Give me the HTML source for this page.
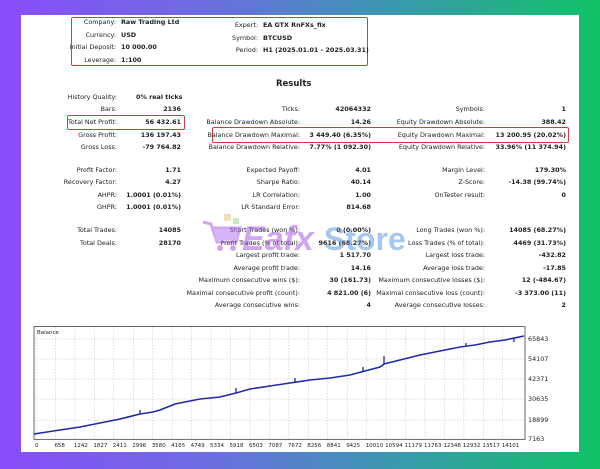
<!DOCTYPE html>
<html><head><meta charset="utf-8"><style>
*{margin:0;padding:0}
body{width:600px;height:469px;overflow:hidden;position:relative;font-family:"DejaVu Sans","Liberation Sans",sans-serif;font-size:6.4px;color:#222;
background:linear-gradient(90deg,#8b4cfb 0%,#6b6ee0 35%,#3a98b0 65%,#11c266 100%);}
#p{position:absolute;left:21px;top:15px;width:558px;height:437px;background:#fff}
.t{position:absolute;white-space:nowrap;line-height:8px}
.b{font-weight:bold}
.box{position:absolute;border:1.5px solid #e0343c;border-radius:2px}
</style></head><body>
<div id="p"></div>
<div class="box" style="left:71px;top:17px;width:295px;height:47px"></div>
<div class="box" style="left:67px;top:115px;width:116px;height:13px"></div>
<div class="box" style="left:212px;top:127px;width:355px;height:14px"></div>
<div id="c"></div>
<svg style="position:absolute;left:200px;top:212px;opacity:.5" width="210" height="45">
<path d="M3 10 L11 12 L17 30 L36 30 L40 16 L13 16" fill="none" stroke="#a050e0" stroke-width="3"/>
<rect x="15" y="17" width="22" height="11" fill="#b070f0"/>
<circle cx="20" cy="36" r="3" fill="#a050e0"/><circle cx="33" cy="36" r="3" fill="#a050e0"/>
<rect x="24" y="2" width="7" height="7" fill="#e0c070"/><rect x="33" y="6" width="6" height="6" fill="#90d090"/>
<text x="42" y="38" font-family="Liberation Sans" font-weight="bold" font-style="italic" font-size="34" fill="#a050e0">Eafx</text>
<text x="124" y="38" font-family="Liberation Sans" font-weight="bold" font-size="32" fill="#5090e0">Store</text>
</svg>
<svg style="position:absolute;left:0;top:0" width="600" height="469">
<rect x="34" y="326.5" width="491" height="113" fill="#fff" stroke="#444" stroke-width="0.8"/>
<g stroke="#bbb" stroke-width="0.5" stroke-dasharray="1.5,1.5" id="g"></g>
<polyline points="34,434 60,430 80,427 100,423 120,419 140,414 153,412 160,410 175,404 200,399 220,397 236,393 250,389 270,386 290,383 310,380 330,378 350,375 365,371 380,367 384,364 400,360 420,355 440,351 460,347 475,345 490,342 505,340 524,336"
 fill="none" stroke="#1e2aa8" stroke-width="1.6"/>
<path d="M140 414 v-4 M236 393 v-5 M295 382 v-4 M363 371 v-4 M384 364 v-8 M466 346 v-3 M514 338 v4" stroke="#1e2aa8" stroke-width="1.3"/>
<text x="37" y="334" font-size="5.5" font-family="DejaVu Sans" fill="#222">Balance</text>
</svg>
<script>
var c=document.getElementById('c'),h='';
function T(x,y,s,cls,al){h+='<div class="t '+(cls||'')+'" style="'+(al==='r'?'right:'+(600-x)+'px':'left:'+x+'px')+';top:'+(y-4)+'px">'+s+'</div>';}
[[22,'Company:','Raw Trading Ltd'],[35,'Currency:','USD'],[47,'Initial Deposit:','10 000.00'],[60,'Leverage:','1:100']].forEach(function(r){T(116,r[0],r[1],'','r');T(121,r[0],r[2],'b');});
[[25,'Expert:','EA GTX RnFXs_fix'],[38,'Symbol:','BTCUSD'],[50,'Period:','H1 (2025.01.01 - 2025.03.31)']].forEach(function(r){T(258,r[0],r[1],'','r');T(263,r[0],r[2],'b');});
h+='<div class="t b" style="left:276px;top:79px;font-size:8.5px;line-height:10px">Results</div>';
var rows=[
[97,'History Quality:','','','','',''],
[109,'Bars:','2136','Ticks:','42064332','Symbols:','1'],
[122,'Total Net Profit:','56 432.61','Balance Drawdown Absolute:','14.26','Equity Drawdown Absolute:','388.42'],
[135,'Gross Profit:','136 197.43','Balance Drawdown Maximal:','3 449.40 (6.35%)','Equity Drawdown Maximal:','13 200.95 (20.02%)'],
[147,'Gross Loss:','-79 764.82','Balance Drawdown Relative:','7.77% (1 092.30)','Equity Drawdown Relative:','33.96% (11 374.94)'],
[170,'Profit Factor:','1.71','Expected Payoff:','4.01','Margin Level:','179.30%'],
[182,'Recovery Factor:','4.27','Sharpe Ratio:','40.14','Z-Score:','-14.38 (99.74%)'],
[195,'AHPR:','1.0001 (0.01%)','LR Correlation:','1.00','OnTester result:','0'],
[207,'GHPR:','1.0001 (0.01%)','LR Standard Error:','814.68','',''],
[230,'Total Trades:','14085','Short Trades (won %):','0 (0.00%)','Long Trades (won %):','14085 (68.27%)'],
[243,'Total Deals:','28170','Profit Trades (% of total):','9616 (68.27%)','Loss Trades (% of total):','4469 (31.73%)'],
[255,'','','Largest profit trade:','1 517.70','Largest loss trade:','-432.82'],
[268,'','','Average profit trade:','14.16','Average loss trade:','-17.85'],
[280,'','','Maximum consecutive wins ($):','30 (161.73)','Maximum consecutive losses ($):','12 (-484.67)'],
[293,'','','Maximal consecutive profit (count):','4 821.00 (6)','Maximal consecutive loss (count):','-3 373.00 (11)'],
[305,'','','Average consecutive wins:','4','Average consecutive losses:','2']];
rows.forEach(function(r){var y=r[0];
if(r[1])T(117,y,r[1],'','r');if(r[2])T(181,y,r[2],'b','r');
if(r[3])T(300,y,r[3],'','r');if(r[4])T(371,y,r[4],'b','r');
if(r[5])T(485,y,r[5],'','r');if(r[6])T(566,y,r[6],'b','r');});
T(136,97,'0% real ticks','b');
var yl=[[339,'65843'],[359,'54107'],[379,'42371'],[399,'30635'],[420,'18899'],[439,'7163']];
var g='';
yl.forEach(function(a){T(528,a[0],a[1]);g+='<line x1="34" x2="525" y1="'+a[0]+'" y2="'+a[0]+'"/>';});
var xl='0 658 1242 1827 2411 2996 3580 4165 4749 5334 5918 6503 7087 7672 8256 8841 9425 10010 10594 11179 11763 12348 12932 13517 14101'.split(' ');
xl.forEach(function(s,i){var x=36+i*19.45;h+='<div class="t" style="left:'+(x-1)+'px;top:442px;font-size:5.5px">'+s+'</div>';g+='<line y1="327" y2="439" x1="'+x+'" x2="'+x+'"/>';});
c.innerHTML=h;document.getElementById('g').innerHTML=g;
</script>
</body></html>
